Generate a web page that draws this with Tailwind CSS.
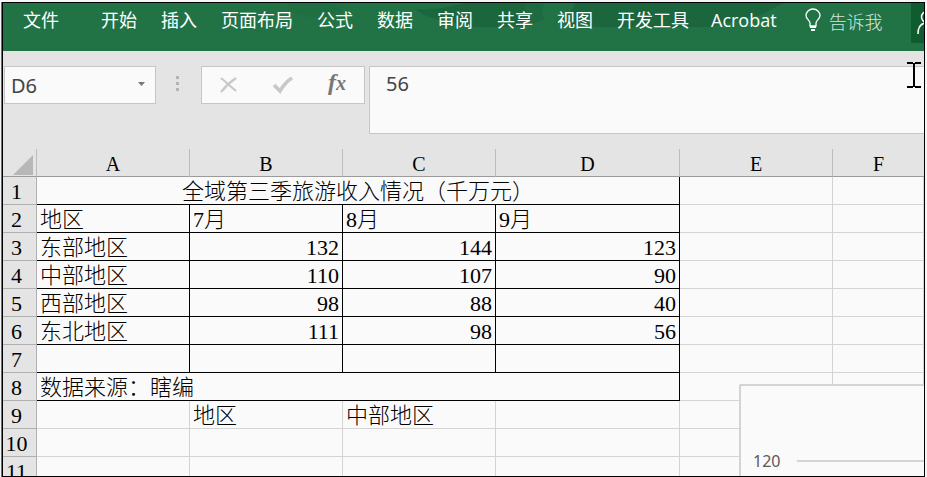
<!DOCTYPE html>
<html lang="zh-CN">
<head>
    <meta charset="UTF-8">
    <meta name="viewport" content="width=device-width, initial-scale=1.0">
    <title>Excel</title>
    <script src="https://cdn.jsdelivr.net/npm/@tailwindcss/browser@4"></script>
</head>
<body class="h-screen overflow-hidden bg-[#f4f6f8] pt-[2px] pr-[2px] pl-[1px] font-['Open_Sans','Noto_Sans_CJK_SC',sans-serif]">
    <div class="h-full border-l border-[#2b7cd3]">
    <div class="relative flex h-full flex-col overflow-hidden border border-black bg-[#e4e4e4]">

        <!-- Ribbon tabs -->
        <nav class="relative flex h-12 shrink-0 items-center overflow-hidden bg-[#217346] pb-[14px] pl-5 text-lg leading-6 whitespace-nowrap text-white">
            <svg class="absolute top-0 left-[280px] h-8 w-[520px]" viewBox="0 0 520 32" fill="#1c633b" aria-hidden="true">
                <path d="M5 0h45l10 8-20 6H24L6 8z" opacity=".25"/>
                <path d="M132 6q20 2 50-6h60v24h-54l-24-6q-20-2-32-12z" opacity=".8"/>
                <path d="M242 0h20q-6 8 0 16l-20 8z" opacity=".5"/>
                <path d="M292 0h208l-22 12-28 6-24 6H298l-26-6q16-4 20-18z" opacity=".8"/>
            </svg>
            <div class="relative flex gap-6">
                <a href="#" class="mr-[18px]">文件</a>
                <a href="#">开始</a>
                <a href="#">插入</a>
                <a href="#">页面布局</a>
                <a href="#">公式</a>
                <a href="#">数据</a>
                <a href="#">审阅</a>
                <a href="#">共享</a>
                <a href="#">视图</a>
                <a href="#">开发工具</a>
                <a href="#" class="-ml-[2px] font-medium">Acrobat</a>
            </div>
            <button type="button" class="relative ml-7 flex items-center gap-2 font-light text-[#d5e5dc]">
                <svg class="h-6 w-4" viewBox="0 0 16 24" fill="none" stroke="#fff" stroke-width="1.3" aria-hidden="true">
                    <path d="M5 18v-3C5 12.500 1 11 1 7.500a7 6.500 0 0 1 14 0C15 11 11 12.500 11 15v3z"/>
                    <path d="M5 19h6M6 22h4" stroke-width="2"/>
                </svg>
                <span class="pt-1">告诉我</span>
            </button>
            <button type="button" aria-label="共享" class="absolute top-0 right-0 h-10 w-[13px] overflow-hidden bg-[#0e5c2f]">
                <svg class="h-10 w-8" viewBox="0 0 32 40" fill="none" stroke="#fff" stroke-width="1.500" aria-hidden="true">
                    <circle cx="16" cy="14" r="5.500"/>
                    <path d="M7 31c0-7 3-11 9-11"/>
                </svg>
            </button>
        </nav>

        <!-- Formula bar -->
        <div class="flex h-[98px] shrink-0 items-start pt-[15px] pl-px text-xl text-[#444]">
            <div class="relative h-[38px] w-[152px]">
                <input type="text" value="D6" aria-label="名称框" class="h-full w-full border border-[#c6c6c6] bg-[#fafafa] px-[6px] font-['Noto_Sans',sans-serif]">
                <svg class="absolute top-4 right-[11px] h-1 w-[7px]" viewBox="0 0 7 4" fill="#777" aria-hidden="true"><path d="M0 0h7L3.500 4z"/></svg>
            </div>
            <div class="flex h-[34px] w-[43px] flex-col items-center justify-center gap-[3px]">
                <i class="size-[3px] bg-[#b4b4b4]"></i>
                <i class="size-[3px] bg-[#b4b4b4]"></i>
                <i class="size-[3px] bg-[#b4b4b4]"></i>
            </div>
            <div class="ml-[2px] flex h-[38px] w-[164px] items-center justify-between border border-[#c6c6c6] bg-[#fafafa] px-[18px]">
                <button type="button" aria-label="取消">
                    <svg class="h-[18px] w-[18px]" viewBox="0 0 18 18" fill="none" stroke="#c8c8c8" stroke-width="2.200"><path d="M1 2c5 4 10 9 15 13M16 2C10 6 5 11 1 16"/></svg>
                </button>
                <button type="button" aria-label="输入">
                    <svg class="h-[18px] w-5" viewBox="0 0 20 18" fill="none" stroke="#c8c8c8" stroke-width="3.600"><path d="M1 9l6 6C10 10 14 5 19 2"/></svg>
                </button>
                <button type="button" aria-label="插入函数" class="pb-1 font-['Liberation_Serif',serif] text-2xl leading-6 font-bold text-[#777] italic">f<span class="text-xl">x</span></button>
            </div>
            <textarea aria-label="编辑栏" class="ml-1 h-[68px] min-w-0 flex-1 resize-none border border-r-0 border-[#c6c6c6] bg-[#fafafa] px-4 py-[3px] font-['Noto_Sans',sans-serif]">56</textarea>
        </div>

        <!-- Sheet -->
        <div class="relative min-h-0 flex-1">
            <table class="w-full table-fixed border-separate border-spacing-0 bg-[#fafafa] font-['Liberation_Serif','Noto_Sans_CJK_SC',serif] text-[22px] leading-[25px] font-light text-black">
                <colgroup>
                    <col class="w-[34px]"><col class="w-[153px]"><col class="w-[153px]"><col class="w-[153px]"><col class="w-[184px]"><col class="w-[153px]"><col>
                </colgroup>
                <thead class="bg-[#e4e4e4] text-xl [&_th]:border-r-[#bdbdbd] [&_th]:border-b [&_th]:border-b-[#9b9b9b] [&_th]:p-0 [&_th]:pt-1 [&_th]:leading-[23px] [&_th]:font-normal">
                    <tr class="h-7">
                        <th class="border-r"><svg class="ml-auto mr-[3px] size-5" viewBox="0 0 20 20" fill="#b7b7b7" aria-hidden="true"><path d="M20 0v20H0z"/></svg></th>
                        <th scope="col" class="border-r">A</th>
                        <th scope="col" class="border-r">B</th>
                        <th scope="col" class="border-r">C</th>
                        <th scope="col" class="border-r">D</th>
                        <th scope="col" class="border-r">E</th>
                        <th scope="col">F</th>
                    </tr>
                </thead>
                <tbody class="[&_td]:h-7 [&_td]:border-r [&_td]:border-b [&_td]:px-[3px] [&_td]:pt-[2px] [&_td]:pb-0 [&_th]:border-r [&_th]:border-b [&_th]:border-[#b0b0b0] [&_th]:bg-[#e4e4e4] [&_th]:p-0 [&_th]:pt-[2px] [&_th]:pr-[6px] [&_th]:font-normal">
                    <tr><th scope="row">1</th><td colspan="4" class="border-black text-center">全域第三季旅游收入情况（千万元）</td><td class="border-[#d4d4d4]"></td><td class="border-[#d4d4d4]"></td></tr>
                    <tr><th scope="row">2</th><td class="border-black">地区</td><td class="border-black">7月</td><td class="border-black">8月</td><td class="border-black">9月</td><td class="border-[#d4d4d4]"></td><td class="border-[#d4d4d4]"></td></tr>
                    <tr><th scope="row">3</th><td class="border-black">东部地区</td><td class="border-black text-right">132</td><td class="border-black text-right">144</td><td class="border-black text-right">123</td><td class="border-[#d4d4d4]"></td><td class="border-[#d4d4d4]"></td></tr>
                    <tr><th scope="row">4</th><td class="border-black">中部地区</td><td class="border-black text-right">110</td><td class="border-black text-right">107</td><td class="border-black text-right">90</td><td class="border-[#d4d4d4]"></td><td class="border-[#d4d4d4]"></td></tr>
                    <tr><th scope="row">5</th><td class="border-black">西部地区</td><td class="border-black text-right">98</td><td class="border-black text-right">88</td><td class="border-black text-right">40</td><td class="border-[#d4d4d4]"></td><td class="border-[#d4d4d4]"></td></tr>
                    <tr><th scope="row">6</th><td class="border-black">东北地区</td><td class="border-black text-right">111</td><td class="border-black text-right">98</td><td class="border-black text-right">56</td><td class="border-[#d4d4d4]"></td><td class="border-[#d4d4d4]"></td></tr>
                    <tr><th scope="row">7</th><td class="border-black"></td><td class="border-black"></td><td class="border-black"></td><td class="border-black"></td><td class="border-[#d4d4d4]"></td><td class="border-[#d4d4d4]"></td></tr>
                    <tr><th scope="row">8</th><td colspan="4" class="border-black">数据来源：瞎编</td><td class="border-[#d4d4d4]"></td><td class="border-[#d4d4d4]"></td></tr>
                    <tr><th scope="row">9</th><td class="border-[#d4d4d4]"></td><td class="border-[#d4d4d4]">地区</td><td class="border-[#d4d4d4]">中部地区</td><td class="border-[#d4d4d4]"></td><td class="border-[#d4d4d4]"></td><td class="border-[#d4d4d4]"></td></tr>
                    <tr><th scope="row">10</th><td class="border-[#d4d4d4]"></td><td class="border-[#d4d4d4]"></td><td class="border-[#d4d4d4]"></td><td class="border-[#d4d4d4]"></td><td class="border-[#d4d4d4]"></td><td class="border-[#d4d4d4]"></td></tr>
                    <tr><th scope="row">11</th><td class="border-[#d4d4d4]"></td><td class="border-[#d4d4d4]"></td><td class="border-[#d4d4d4]"></td><td class="border-[#d4d4d4]"></td><td class="border-[#d4d4d4]"></td><td class="border-[#d4d4d4]"></td></tr>
                </tbody>
            </table>

            <!-- Chart floating over the cells -->
            <div class="absolute top-[235px] right-0 left-[736px] h-60 rounded-tl-xs border-t-2 border-l-2 border-[#d4d4d4] bg-[#fafafa]">
                <div class="flex items-center gap-[17px] pt-[63px] pl-3 font-['Noto_Sans',sans-serif] text-base leading-6 text-[#595959]">
                    <span>120</span>
                    <span class="h-[2px] flex-1 bg-[#d4d4d4]"></span>
                </div>
            </div>
        </div>

        <!-- Mouse pointer -->
        <svg class="absolute top-[59px] right-[3px] h-[26px] w-[14px]" viewBox="0 0 14 26" fill="none" stroke="#000" stroke-width="2" aria-hidden="true">
            <path d="M0 1h6M8 1h6M7 1v24M0 25h6M8 25h6"/>
        </svg>
    </div>
    </div>
</body>
</html>
